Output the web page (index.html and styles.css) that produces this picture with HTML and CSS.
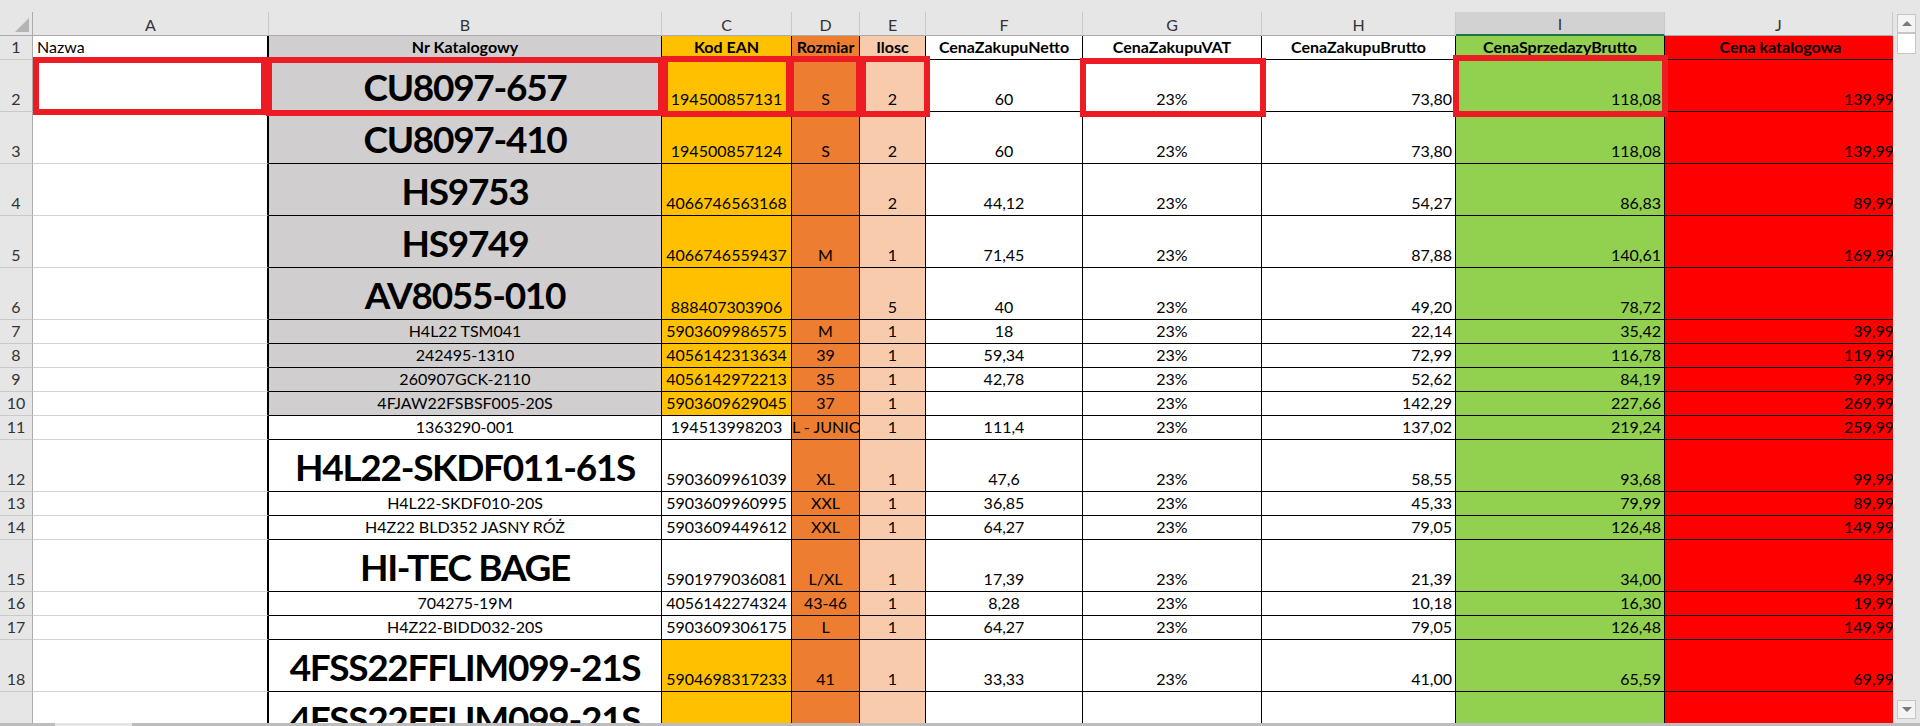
FILE: index.html
```html
<!DOCTYPE html>
<html lang="pl">
<head>
<meta charset="utf-8">
<title>Arkusz</title>
<link rel="stylesheet" href="styles.css">
</head>
<body>
<div class="app">
  <div class="topbar"></div>
  <div class="body">
    <div class="sheet">
      <div class="grid">
        <div class="corner"><span class="tri"></span></div>
        <div class="ch">A</div><div class="ch">B</div><div class="ch">C</div><div class="ch">D</div><div class="ch">E</div><div class="ch">F</div><div class="ch">G</div><div class="ch">H</div><div class="ch sel">I</div><div class="ch">J</div>

        <div class="rh">1</div><div class="a">Nazwa</div><div class="c gry hd">Nr Katalogowy</div><div class="c yel hd">Kod EAN</div><div class="c org hd">Rozmiar</div><div class="c pch hd">Ilosc</div><div class="c hd">CenaZakupuNetto</div><div class="c hd">CenaZakupuVAT</div><div class="c hd">CenaZakupuBrutto</div><div class="c grn hd">CenaSprzedazyBrutto</div><div class="c red hd j">Cena katalogowa</div>

        <div class="rh">2</div><div class="a"></div><div class="c gry big">CU8097-657</div><div class="c yel">194500857131</div><div class="c org">S</div><div class="c pch">2</div><div class="c">60</div><div class="c">23%</div><div class="c rt">73,80</div><div class="c grn rt">118,08</div><div class="c red rt j"><span>139,99</span></div>

        <div class="rh">3</div><div class="a"></div><div class="c gry big">CU8097-410</div><div class="c yel">194500857124</div><div class="c org">S</div><div class="c pch">2</div><div class="c">60</div><div class="c">23%</div><div class="c rt">73,80</div><div class="c grn rt">118,08</div><div class="c red rt j"><span>139,99</span></div>

        <div class="rh">4</div><div class="a"></div><div class="c gry big">HS9753</div><div class="c yel">4066746563168</div><div class="c org"></div><div class="c pch">2</div><div class="c">44,12</div><div class="c">23%</div><div class="c rt">54,27</div><div class="c grn rt">86,83</div><div class="c red rt j"><span>89,99</span></div>

        <div class="rh">5</div><div class="a"></div><div class="c gry big">HS9749</div><div class="c yel">4066746559437</div><div class="c org">M</div><div class="c pch">1</div><div class="c">71,45</div><div class="c">23%</div><div class="c rt">87,88</div><div class="c grn rt">140,61</div><div class="c red rt j"><span>169,99</span></div>

        <div class="rh">6</div><div class="a"></div><div class="c gry big">AV8055-010</div><div class="c yel">888407303906</div><div class="c org"></div><div class="c pch">5</div><div class="c">40</div><div class="c">23%</div><div class="c rt">49,20</div><div class="c grn rt">78,72</div><div class="c red rt j"></div>

        <div class="rh">7</div><div class="a"></div><div class="c gry">H4L22 TSM041</div><div class="c yel">5903609986575</div><div class="c org">M</div><div class="c pch">1</div><div class="c">18</div><div class="c">23%</div><div class="c rt">22,14</div><div class="c grn rt">35,42</div><div class="c red rt j"><span>39,99</span></div>

        <div class="rh">8</div><div class="a"></div><div class="c gry">242495-1310</div><div class="c yel">4056142313634</div><div class="c org">39</div><div class="c pch">1</div><div class="c">59,34</div><div class="c">23%</div><div class="c rt">72,99</div><div class="c grn rt">116,78</div><div class="c red rt j"><span>119,99</span></div>

        <div class="rh">9</div><div class="a"></div><div class="c gry">260907GCK-2110</div><div class="c yel">4056142972213</div><div class="c org">35</div><div class="c pch">1</div><div class="c">42,78</div><div class="c">23%</div><div class="c rt">52,62</div><div class="c grn rt">84,19</div><div class="c red rt j"><span>99,99</span></div>

        <div class="rh">10</div><div class="a"></div><div class="c gry">4FJAW22FSBSF005-20S</div><div class="c yel">5903609629045</div><div class="c org">37</div><div class="c pch">1</div><div class="c"></div><div class="c">23%</div><div class="c rt">142,29</div><div class="c grn rt">227,66</div><div class="c red rt j"><span>269,99</span></div>

        <div class="rh">11</div><div class="a"></div><div class="c">1363290-001</div><div class="c">194513998203</div><div class="c org lf">L - JUNIOR</div><div class="c pch">1</div><div class="c">111,4</div><div class="c">23%</div><div class="c rt">137,02</div><div class="c grn rt">219,24</div><div class="c red rt j"><span>259,99</span></div>

        <div class="rh">12</div><div class="a"></div><div class="c big">H4L22-SKDF011-61S</div><div class="c">5903609961039</div><div class="c org">XL</div><div class="c pch">1</div><div class="c">47,6</div><div class="c">23%</div><div class="c rt">58,55</div><div class="c grn rt">93,68</div><div class="c red rt j"><span>99,99</span></div>

        <div class="rh">13</div><div class="a"></div><div class="c">H4L22-SKDF010-20S</div><div class="c">5903609960995</div><div class="c org">XXL</div><div class="c pch">1</div><div class="c">36,85</div><div class="c">23%</div><div class="c rt">45,33</div><div class="c grn rt">79,99</div><div class="c red rt j"><span>89,99</span></div>

        <div class="rh">14</div><div class="a"></div><div class="c">H4Z22 BLD352 JASNY RÓŻ</div><div class="c">5903609449612</div><div class="c org">XXL</div><div class="c pch">1</div><div class="c">64,27</div><div class="c">23%</div><div class="c rt">79,05</div><div class="c grn rt">126,48</div><div class="c red rt j"><span>149,99</span></div>

        <div class="rh">15</div><div class="a"></div><div class="c big">HI-TEC BAGE</div><div class="c">5901979036081</div><div class="c org">L/XL</div><div class="c pch">1</div><div class="c">17,39</div><div class="c">23%</div><div class="c rt">21,39</div><div class="c grn rt">34,00</div><div class="c red rt j"><span>49,99</span></div>

        <div class="rh">16</div><div class="a"></div><div class="c">704275-19M</div><div class="c">4056142274324</div><div class="c org">43-46</div><div class="c pch">1</div><div class="c">8,28</div><div class="c">23%</div><div class="c rt">10,18</div><div class="c grn rt">16,30</div><div class="c red rt j"><span>19,99</span></div>

        <div class="rh">17</div><div class="a"></div><div class="c">H4Z22-BIDD032-20S</div><div class="c">5903609306175</div><div class="c org">L</div><div class="c pch">1</div><div class="c">64,27</div><div class="c">23%</div><div class="c rt">79,05</div><div class="c grn rt">126,48</div><div class="c red rt j"><span>149,99</span></div>

        <div class="rh">18</div><div class="a"></div><div class="c big">4FSS22FFLIM099-21S</div><div class="c yel">5904698317233</div><div class="c org">41</div><div class="c pch">1</div><div class="c">33,33</div><div class="c">23%</div><div class="c rt">41,00</div><div class="c grn rt">65,59</div><div class="c red rt j"><span>69,99</span></div>

        <div class="rh">19</div><div class="a"></div><div class="c big">4FSS22FFLIM099-21S</div><div class="c yel"></div><div class="c org"></div><div class="c pch"></div><div class="c"></div><div class="c"></div><div class="c rt"></div><div class="c grn rt"></div><div class="c red rt j"></div>
      </div>
    </div>
    <div class="vscroll">
      <div class="sbtn"><span class="arr up"></span></div>
      <div class="thumb"></div>
      <div class="track"></div>
      <div class="sbtn"><span class="arr down"></span></div>
    </div>
  </div>
  <div class="hbar"><span class="hgap"></span></div>

  <div class="mark m-a"></div>
  <div class="mark m-b"></div>
  <div class="mark m-c"></div>
  <div class="mark m-d"></div>
  <div class="mark m-e"></div>
  <div class="mark m-g"></div>
  <div class="mark m-i"></div>
</div>
</body>
</html>
```

FILE: styles.css
```css
* { box-sizing: border-box; margin: 0; padding: 0; }
html, body {
  width: 1920px;
  height: 726px;
  overflow: hidden;
  background: #e6e6e6;
  font-family: Lato, "Open Sans", "Liberation Sans", sans-serif;
  font-size: 16px;
  color: #000;
}
.app {
  position: relative;
  display: flex;
  flex-direction: column;
  width: 1920px;
  height: 726px;
}
.topbar { height: 12px; background: #e6e6e6; flex: none; }
.body { display: flex; height: 711px; flex: none; }
.sheet { width: 1893px; height: 711px; overflow: hidden; background: #fff; flex: none; }
.grid {
  display: grid;
  grid-template-columns: 33px 236px 393px 130px 68px 66px 157px 179px 194px 209px 228px;
  grid-template-rows: 24px 24px repeat(5, 52px) repeat(5, 24px) 52px 24px 24px 52px 24px 24px 52px 52px;
}
.corner {
  position: relative;
  background: #e6e6e6;
  border-right: 1px solid #ababab;
  border-bottom: 1px solid #ababab;
}
.tri {
  position: absolute;
  right: 3px;
  bottom: 3px;
  width: 0;
  height: 0;
  border-left: 14px solid transparent;
  border-bottom: 14px solid #b4b4b4;
}
.ch {
  background: #e6e6e6;
  border-right: 1px solid #c9c9c9;
  border-bottom: 1px solid #ababab;
  color: #333;
  display: flex;
  align-items: center;
  justify-content: center;
  padding-top: 1px;
}
.ch.sel { background: #d2d2d2; border-bottom: 2px solid #217346; }
.rh {
  background: #e6e6e6;
  border-right: 1px solid #ababab;
  border-bottom: 1px solid #c9c9c9;
  color: #333;
  display: flex;
  align-items: flex-end;
  justify-content: center;
  line-height: 20px;
  padding-bottom: 2px;
}
.a {
  border-bottom: 1px solid #d4d4d4;
  border-right: 2px solid #000;
  display: flex;
  align-items: flex-end;
  padding: 0 4px 2px;
  line-height: 20px;
  white-space: nowrap;
  overflow: hidden;
}
.c {
  border-right: 1px solid #000;
  border-bottom: 1px solid #000;
  display: flex;
  align-items: flex-end;
  justify-content: center;
  padding: 0 3px 2px;
  line-height: 20px;
  white-space: nowrap;
  overflow: hidden;
  background: #fff;
}
.hd { font-weight: 700; }
.rt { justify-content: flex-end; }
.lf { justify-content: flex-start; padding-left: 0; }
.j { border-right: none; padding-right: 0; }
.j span { margin-right: -1px; }
.big {
  font-size: 37px;
  font-weight: 700;
  letter-spacing: -1.3px;
  line-height: 44px;
  padding-bottom: 2px;
}
.gry { background: #d0cece; }
.yel { background: #ffc000; }
.org { background: #ed7d31; }
.pch { background: #f8cbad; }
.grn { background: #92d050; }
.red { background: #ff0000; }

.vscroll {
  width: 27px;
  height: 711px;
  background: #e6e6e6;
  display: flex;
  flex-direction: column;
  padding: 2px 4px 4px 4px;
  flex: none;
}
.sbtn {
  height: 19px;
  background: #f4f4f4;
  border: 1px solid #c6c6c6;
  display: flex;
  align-items: center;
  justify-content: center;
  flex: none;
}
.thumb {
  height: 21px;
  background: #fff;
  border: 1px solid #c6c6c6;
  flex: none;
}
.track { flex: 1; }
.arr { width: 0; height: 0; border-left: 5px solid transparent; border-right: 5px solid transparent; }
.arr.up { border-bottom: 5px solid #7a7a7a; }
.arr.down { border-top: 5px solid #7a7a7a; }

.hbar { height: 3px; background: #bdbdbd; flex: none; position: relative; }
.hgap { position: absolute; left: 55px; top: 0; width: 77px; height: 3px; background: #e6e6e6; }

.mark { position: absolute; border: 6px solid #ed1c24; }
.m-a { left: 33px; top: 57px; width: 234px; height: 58px; }
.m-b { left: 266px; top: 57px; width: 398px; height: 59px; }
.m-c { left: 662px; top: 56px; width: 130px; height: 61px; }
.m-d { left: 788px; top: 56px; width: 74px; height: 61px; }
.m-e { left: 860px; top: 56px; width: 70px; height: 61px; }
.m-g { left: 1080px; top: 58px; width: 186px; height: 59px; }
.m-i { left: 1453px; top: 55px; width: 215px; height: 62px; }
```
